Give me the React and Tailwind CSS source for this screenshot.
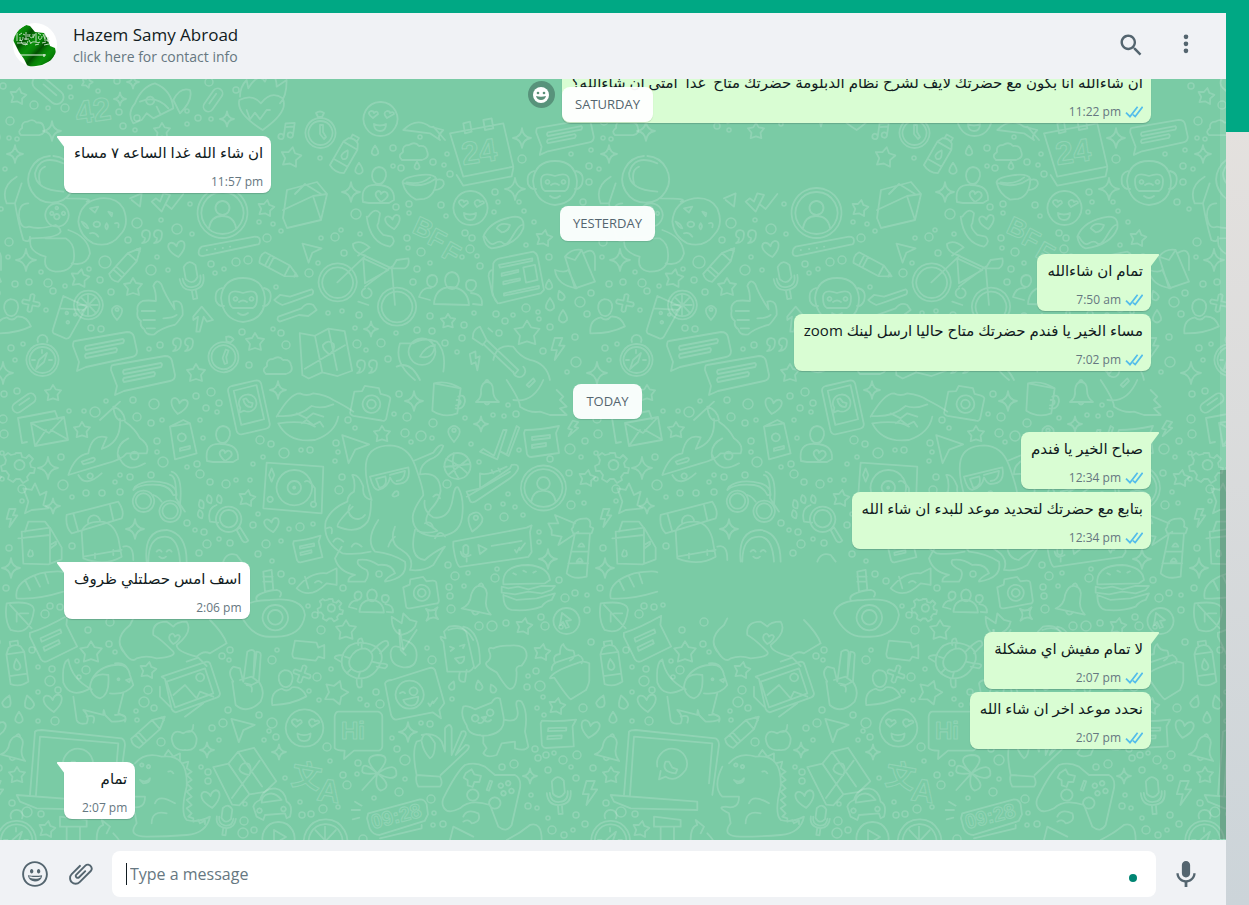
import React from "react";

/* ------------------------------------------------------------------ */
/*  DATA                                                               */
/* ------------------------------------------------------------------ */
const MESSAGES = [
  { out: true, first: false, react: true, text: "ان شاءالله انا بكون مع حضرتك لايف لشرح نظام الدبلومة حضرتك متاح  غدا  امتى ان شاءالله؟", time: "11:22 pm" },
  { out: false, first: true, text: "ان شاء الله غدا الساعه ٧ مساء", time: "11:57 pm" },
  { day: "YESTERDAY" },
  { out: true, first: true, text: "تمام ان شاءالله", time: "7:50 am" },
  { out: true, first: false, text: "مساء الخير يا فندم حضرتك متاح حاليا ارسل لينك zoom", time: "7:02 pm" },
  { day: "TODAY" },
  { out: true, first: true, text: "صباح الخير يا فندم", time: "12:34 pm" },
  { out: true, first: false, text: "بتابع مع حضرتك لتحديد موعد للبدء ان شاء الله", time: "12:34 pm" },
  { out: false, first: true, text: "اسف امس حصلتلي ظروف", time: "2:06 pm" },
  { out: true, first: true, text: "لا تمام مفيش اي مشكلة", time: "2:07 pm" },
  { out: true, first: false, text: "نحدد موعد اخر ان شاء الله", time: "2:07 pm" },
  { out: false, first: true, text: "تمام", time: "2:07 pm" },
];

/* ------------------------------------------------------------------ */
/*  ICONS                                                              */
/* ------------------------------------------------------------------ */
const PATHS = {
  search: "M15.9,14.3H15L14.7,14c1-1.1,1.6-2.7,1.6-4.3c0-3.7-3-6.7-6.7-6.7S3,6,3,9.7s3,6.7,6.7,6.7c1.6,0,3.2-0.6,4.3-1.6l0.3,0.3v0.8l5.1,5.1l1.5-1.5L15.9,14.3z M9.7,14.3c-2.6,0-4.6-2.1-4.6-4.6s2.1-4.6,4.6-4.6s4.6,2.1,4.6,4.6S12.3,14.3,9.7,14.3z",
  menu: "M12 7a2 2 0 1 0-.001-4.001A2 2 0 0 0 12 7zm0 2a2 2 0 1 0-.001 3.999A2 2 0 0 0 12 9zm0 6a2 2 0 1 0-.001 3.999A2 2 0 0 0 12 15z",
  smiley: "M9.153 11.603c.795 0 1.439-.879 1.439-1.962s-.644-1.962-1.439-1.962-1.439.879-1.439 1.962.644 1.962 1.439 1.962zm-3.204 1.362c-.026-.307-.131 5.218 6.063 5.551 6.066-.25 6.066-5.551 6.066-5.551-6.078 1.416-12.129 0-12.129 0zm11.363 1.108s-.669 1.959-5.051 1.959c-3.505 0-5.388-1.164-5.607-1.959 0 0 5.912 1.055 10.658 0zM11.804 1.011C5.609 1.011.978 6.033.978 12.228s4.826 10.761 11.021 10.761S23.02 18.423 23.02 12.228c.001-6.195-5.021-11.217-11.216-11.217zM12 21.354c-5.273 0-9.381-3.886-9.381-9.159s3.942-9.548 9.215-9.548 9.548 4.275 9.548 9.548c-.001 5.272-4.109 9.159-9.382 9.159zm3.108-9.751c.795 0 1.439-.879 1.439-1.962s-.644-1.962-1.439-1.962-1.439.879-1.439 1.962.644 1.962 1.439 1.962z",
  clip: "M1.816 15.556v.002c0 1.502.584 2.912 1.646 3.972s2.472 1.647 3.974 1.647a5.58 5.58 0 0 0 3.972-1.645l9.547-9.548c.769-.768 1.147-1.767 1.058-2.817-.079-.968-.548-1.927-1.319-2.698-1.594-1.592-4.068-1.711-5.517-.262l-7.916 7.915c-.881.881-.792 2.25.214 3.261.959.958 2.423 1.053 3.263.215l5.511-5.512c.28-.28.267-.722.053-.936l-.244-.244c-.191-.191-.567-.349-.957.04l-5.506 5.506c-.18.18-.635.127-.976-.214-.098-.097-.576-.613-.213-.973l7.915-7.917c.818-.817 2.267-.699 3.23.262.5.501.802 1.1.849 1.685.051.573-.156 1.111-.589 1.543l-9.547 9.549a3.97 3.97 0 0 1-2.829 1.171 3.975 3.975 0 0 1-2.83-1.173 3.973 3.973 0 0 1-1.172-2.828c0-1.071.415-2.076 1.172-2.83l7.209-7.211c.157-.157.264-.579.028-.814L11.5 4.36a.572.572 0 0 0-.834.018l-7.205 7.207a5.577 5.577 0 0 0-1.645 3.971z",
  mic: "M11.999 14.942c2.001 0 3.531-1.53 3.531-3.531V4.35c0-2.001-1.53-3.531-3.531-3.531S8.469 2.35 8.469 4.35v7.061c0 2.001 1.53 3.531 3.53 3.531zm6.238-3.53c0 3.531-2.942 6.002-6.237 6.002s-6.237-2.471-6.237-6.002H3.761c0 4.001 3.178 7.297 7.061 7.885v3.884h2.354v-3.884c3.884-.588 7.061-3.884 7.061-7.885h-2z",
};

function Icon({ name }) {
  return (
    <svg viewBox="0 0 24 24" className="h-7 w-7 fill-[#54656f]" aria-hidden="true">
      <path d={PATHS[name]} />
    </svg>
  );
}

function DoubleCheck() {
  return (
    <svg viewBox="0 0 18 12" className="h-3 w-[18px]" fill="none" stroke="#53bdeb" strokeWidth="1.7" aria-hidden="true">
      <path d="M1 6.6l4 4L12.6.8M8 8.6l2.2 2L17.6.8" />
    </svg>
  );
}

function Avatar() {
  return (
    <svg viewBox="0 0 44 44" className="h-11 w-11 rounded-full" role="img" aria-label="Profile photo">
      <defs>
        <linearGradient id="flag" x1="0" y1="0" x2="0.16" y2="0.14" spreadMethod="reflect">
          <stop offset="0" stopColor="#024f02" />
          <stop offset="0.5" stopColor="#068006" />
          <stop offset="1" stopColor="#0a8f0a" />
        </linearGradient>
      </defs>
      <rect width="44" height="44" fill="#fff" />
      <path d="M1 13l4-6 8-5 4 1 5 6 9 1 3 5 3 8 5 2 1 5-4 7-10 5-6 1-8 1-4-8-5-7-4-8-2-4z" fill="url(#flag)" />
      <path d="M4 10v8M6 12l3-2M7 14c0 5 3 5 3 0M13 9v8M10 11l2 1M11 16h5M15 11v3M17 11c-2 4 4 6 3 0M20 15l2-4M23 10v9M25 10l3 2M26 13c-2 4 3 5 3 0M30 11l2 5M32 11v7M35 14v5M33 17l4 1M4 20h9M6 17l3 1M8 19c2 4 6 3 7-1M16 17l2 4M18 20c3-3 6 1 9-1M22 22l4-1M29 20l4-1M31 22l5-1M12 22l3-1" fill="none" stroke="#d3e6d3" strokeWidth="0.9" />
      <path d="M7 32h26M31 31v3" fill="none" stroke="#e6f3e6" strokeWidth="1.2" />
    </svg>
  );
}

/* ------------------------------------------------------------------ */
/*  WALLPAPER                                                          */
/* ------------------------------------------------------------------ */
// Small motifs, each drawn round its own centre
const MOTIFS = {
  star: "M0-9l3 5 6 1-4 5 1 6-6-2-6 2 1-6-4-5 6-1z",
  spark: "M0-11q1 10 10 11q-9 1-10 11q-1-10-10-11q9-1 10-11z",
  plus: "M-2-8q2-2 4 0v6h6q2 2 0 4h-6v6q-2 2-4 0v-6h-6q-2-2 0-4h6z",
  heart: "M0 9C-12 0-10-7-6-8Q-2-8 0-3Q2-8 6-8C10-7 12 0 0 9z",
  bolt: "M-3-10h7l-3 7h5l-9 13 2-9h-5z",
  drop: "M0-7q-5 7-4 10q4 5 8 0q1-3-4-10z",
  cloud: "M-12 8q-5-4 1-8q-1-7 6-7q6-4 10 1q7-1 8 5q3 7-5 9z",
  pin: "M0 10q-8-9-6-14q6-8 12 0q2 5-6 14zM-2-3a2 2 0 1 0 4 0a2 2 0 1 0-4 0",
  plane: "M-9-10l20 9-11 3-6 10z",
  pencil: "M-20-6h28l12 6-12 6h-28q-4-6 0-12zM-14-6v12M-10-6v12M8-6v12M17-2v4",
  quotes: "M-3-4a4 4 0 1 0-5 4q0 4-3 5q8 0 8-9zM9-4a4 4 0 1 0-5 4q0 4-3 5q8 0 8-9z",
  mic: "M-6-14q6-8 12 0v12q-6 8-12 0zM-12-3q0 13 12 13q12 0 12-13M-9-3q0 10 9 10q9 0 9-10M-2 10v9h4v-9",
  pill: "M-8-5h16a5 5 0 0 1 0 10h-16a5 5 0 0 1 0-10zM-5-1h12",
  note: "M-4 6v-15l10-2v14M-4-5l10-2M-4 6a3 3 0 1 0-3 3q3 0 3-3M6 3a3 3 0 1 0-3 3q3 0 3-3",
  bell: "M-11 9q6-4 5-12q1-8 6-8q6 0 6 8q0 8 6 12zM-3 9q3 5 6 0M-2-11q2-4 4 0",
  person: "M0-18q8 1 7 9q-2 8-7 8q-6 0-7-8q0-8 7-9zM-17 15q0-14 12-15q5 5 10 0q10 0 13 11q-15 6-35 4z",
  lover: "M0-20q8 1 7 9q-2 8-7 8q-6 0-7-8q0-8 7-9zM-16 15q-3-18 14-17q18 0 17 15l-5 3h-20zM2 15q-9-8-3-11q3 0 3 3q3-4 6-1q3 4-6 9z",
  group: "M0-18q7 1 7 9q-2 8-7 8q-6 0-7-8q0-8 7-9zM-18 14q1-16 16-17q18 1 19 18zM-20-15q6 0 5 7q-2 5-5 5q-5-1-5-6q0-5 5-6zM19-10q6 0 5 6q-2 5-5 5q-5-1-5-6q0-5 5-5zM-22 10l-11-3q3-10 12-9M21 14l9 1q1-11-11-12",
  bubble: "M-30-9l52-9q6 0 7 5l3 14q0 5-5 6l-46 10-9 4 2-9-6-16q0-5 2-5zM-19-4l37-7q2 1 0 4l-37 7q-2-2 0-4zM-19 4l30-6q2 1 0 4l-30 6q-2-2 0-4z",
  card: "M-17-10q15 0 34-4l-3 7 3 20-28 4q-3 0-4-3l-3-21zM-10-3l18-2v3l-18 2zM-10 5l14-2v3l-14 2z",
  envelope: "M-20-10l30-8 10 12-6 26-34 8-4-10zM-24 10l30-14 14-2M6-4l8 24M-12-6l10-10 16 10",
  mail: "M-14-16l26-5 3 8M-16 10l-5 1-4-25 11-2M-12-9l33-6 4 23-33 6zM-12-9l18 10 15-16M-8 14l11-16M24 7l-16-9",
  clock: "M0-15a15 15 0 1 0 1 0zM0-12a12 12 0 1 0 1 0zM0-8v9l4 5 2-2-3-5v-7zM-4-20q4-3 8 0l-2 4h-4z",
  compass: "M0-16a16 16 0 1 0 1 0zM0-13a13 13 0 1 0 1 0zM5-7l-3 9-8 7 3-9zM-4-18a5 5 0 1 1 9 0M-10 0h3M10 0h-3M0-10v3",
  profile: "M0-25a25 25 0 1 0 1 0zM0-21a21 21 0 1 0 1 0zM0-12a7 7 0 1 0 1 0zM-13 15q2-12 13-12q12 0 14 12",
  face: "M0-17a17 17 0 1 0 1 0zM-7-1q-7-5-2-7q3 0 3 2q4-3 4 1zM7-1q-5-5 0-7q3 0 3 2q4-2 4 1zM-6 5q6 3 12 0q0 7-6 7t-6-7z",
  phone: "M-16-20l26-6q4 0 5 4l9 42q0 4-4 5l-26 6q-4 0-5-4l-9-42q0-4 4-5zM-14-15l24-6 8 36-24 6zM0-11a9 9 0 1 1-3 17l-5 2 1-5a9 9 0 0 1 7-14M-4-6q2 9 9 8l1-4-4-1-3-4z",
  camera: "M-16-9l7-1 2-5 13 1 2 5 6 1q4 1 3 4l-2 17q-1 3-4 2l-26-2q-4-1-3-4zM0-7a8 8 0 1 0 1 0zM0-3a4 4 0 1 0 1 0z",
  gear: "M-3-12h5l1 4 4 1 3-3 4 4-3 4 1 4 4 1-1 5-4 0-3 4 1 3-5 3-3-4-4 0-3 3-5-3 1-4-3-4-4 0-1-5 4-2 1-4-2-4 4-3 3 2 4-1zM0-5a5 5 0 1 0 1 0z",
  bottle: "M-6-18q6-4 12 0l3 6v30q-9 5-18 0v-30zM-9-12h18M-9 10h18M0-6q-4 6-3 9q3 4 6 0q1-3-3-9M-4-19v-5h8v5",
  map: "M-24-16l15 4 14-6 16 4 4 40-15 4-15-5-14 5-6-4zM-9-12l4 36M5-18l5 42M-22 20l42-20M4 8q-7-6-6-10q6-6 11 0q1 5-5 10z",
  face2: "M0-22q20 0 22 20q0 22-22 24q-20-2-22-24q2-20 22-20zM-21-12q-8 2-6 13q3 6 8 5M21-12q9 2 6 13q-3 6-7 5M-14-2q0-10 14-5q14-5 14 5q0 8-4 10h-20q-4-2-4-10zM-8-3a2 2 0 1 0 1 0M8-3a2 2 0 1 0 1 0M-5 13q5 4 10 0M-4 2q4-3 8 0",
  cup: "M-20-6q0-5 16-6q16-1 18 5q-2 17-14 19h-8q-10-6-12-18zM-20-6q17 8 33-1M14-6q8-1 7 5q-2 5-10 5M-16-6q14 4 24-3",
  citrus: "M0-18a18 18 0 1 0 1 0zM0-14a14 14 0 1 0 1 0zM0-12v24M-12 0h24M-8-9l17 18M9-9l-17 18",
  play: "M0-16a16 16 0 1 0 1 0zM-4-8l12 7-12 7z",
  cursor: "M0-13a13 13 0 1 0 1 0zM-4-8l9 7-5 1 3 6-3 1-3-6-3 3z",
  ball: "M0-13a13 13 0 1 0 1 0zM-11-7q11 4 21 14M-9 9q10-8 19-15M-3-13q-4 14 5 26M-13 1l26-3",
};

// motif, x, y, rotation, scale
const PLACED = [
  ["pill", 48, 90, 40, 1.4], ["star", 18, 96, 10, 0.9], ["spark", 120, 99, 0, 0.6], ["spark", 133, 82, 0, 0.6], ["pill", 213, 100, -55, 1],
  ["spark", 227, 119, 0, 0.7], ["spark", 52, 131, 0, 0.9], ["star", 162, 131, 0, 0.9], ["cloud", 32, 128, 0, 0.9], ["note", 288, 132, 8, 0.9],
  ["star", 87, 82, 20, 0.6], ["clock", 320, 133, 0, 1], ["star", 291, 157, 10, 1.1], ["spark", 15, 154, 0, 0.8], ["pencil", 127, 263, -48, 1],
  ["quotes", 153, 238, 0, 1], ["heart", 177, 249, -10, 0.9], ["profile", 222, 213, 0, 1], ["star", 266, 208, 10, 0.9], ["envelope", 307, 200, 0, 1],
  ["plane", 312, 251, -10, 0.9], ["pencil", 280, 267, 28, 1], ["mic", 192, 280, -10, 1], ["spark", 26, 260, 0, 1], ["star", 80, 278, 10, 1],
  ["star", 133, 287, 0, 1], ["face2", 243, 300, 0, 1], ["person", 12, 317, -5, 1], ["plus", 31, 303, 12, 1], ["pin", 117, 312, 0, 0.8],
  ["citrus", 88, 305, 0, 0.8], ["map", 325, 347, -5, 1], ["compass", 42, 360, 0, 1], ["bubble", 105, 350, 0, 1], ["bubble", 143, 374, 0, 1],
  ["quotes", 184, 346, 0, 1], ["clock", 223, 357, 20, 1], ["star", 255, 342, 0, 1], ["cloud", 278, 366, 0, 1], ["star", 196, 373, 0, 1],
  ["spark", 3, 373, 0, 1], ["bottle", 345, 155, 30, 0.9], ["face", 380, 119, 0, 1], ["cloud", 414, 152, 0, 1], ["cup", 423, 187, -5, 1],
  ["lover", 379, 187, 0, 1], ["spark", 351, 192, 0, 0.9], ["spark", 515, 189, 0, 1], ["spark", 522, 138, 0, 0.9],
  ["face", 470, 208, 0, 1], ["heart", 393, 222, -10, 0.8], ["face2", 555, 183, 0, 1], ["bubble", 565, 136, 0, 0.9], ["star", 544, 238, 10, 0.9],
  ["group", 452, 290, 0, 1], ["star", 448, 321, 0, 0.8], ["spark", 371, 329, 0, 0.7], ["bolt", 476, 361, -25, 0.9], ["bolt", 558, 349, 0, 1.1],
  ["star", 527, 333, 0, 1.4], ["quotes", 368, 368, 0, 1], ["drop", 375, 151, 0, 0.8], ["drop", 359, 169, 0, 0.9], ["drop", 417, 166, 0, 0.6],
  ["drop", 549, 285, 0, 0.8], ["drop", 550, 305, 0, 1], ["drop", 561, 296, -20, 0.8], ["drop", 563, 317, 0, 1], ["pill", 24, 403, -35, 1],
  ["mail", 43, 432, 0, 1], ["gear", 19, 465, 0, 1], ["spark", 48, 468, 0, 1], ["star", 53, 393, 0, 0.9], ["star", 82, 430, 0, 0.9],
  ["spark", 53, 506, 0, 0.7], ["bolt", 12, 518, 0, 0.9], ["spark", 135, 529, 0, 0.9], ["heart", 179, 406, 10, 0.9], ["lover", 223, 446, 0, 1],
  ["phone", 247, 405, 0, 0.95], ["spark", 278, 390, 0, 0.8], ["star", 247, 498, 10, 0.9], ["heart", 272, 525, -10, 0.8], ["card", 308, 548, -5, 0.8],
  ["spark", 11, 568, 0, 0.9], ["camera", 371, 403, 5, 1.1], ["spark", 414, 401, 0, 0.9], ["bell", 487, 393, 0, 1], ["star", 382, 434, 0, 0.9],
  ["plane", 355, 447, -5, 1.3], ["pin", 454, 433, 0, 0.9], ["spark", 481, 424, 0, 0.7], ["card", 542, 440, 0, 1], ["bolt", 573, 429, 15, 0.8],
  ["ball", 457, 466, 0, 1], ["profile", 543, 488, 0, 0.9], ["star", 587, 478, 10, 0.9], ["pin", 475, 521, 15, 1.1], ["spark", 548, 559, 0, 0.9],
  ["bell", 478, 600, 12, 1.3], ["camera", 421, 592, -15, 1], ["group", 372, 602, 0, 0.7], ["gear", 331, 608, 0, 0.75], ["star", 346, 630, 0, 1.1],
  ["spark", 432, 614, 40, 0.8], ["star", 524, 626, 10, 0.9], ["cursor", 566, 621, 0, 1], ["bottle", 17, 665, -8, 1], ["card", 53, 638, -18, 1.2],
  ["star", 91, 652, 0, 1.2], ["star", 148, 670, 10, 0.9], ["plus", 302, 674, 20, 1], ["person", 287, 688, -8, 1], ["drop", 7, 702, 20, 1],
  ["drop", 29, 703, -15, 1.1], ["drop", 19, 718, 0, 0.9], ["heart", 53, 703, -5, 1], ["pencil", 150, 730, -42, 1], ["plane", 243, 728, -10, 1.1],
  ["face", 304, 728, 0, 1.1], ["map", 242, 770, -28, 1], ["spark", 207, 750, 0, 0.7], ["spark", 279, 752, 0, 0.7], ["heart", 211, 799, -8, 1],
  ["mic", 226, 820, 8, 0.8], ["play", 278, 838, 0, 1], ["citrus", 325, 841, 0, 1.2], ["star", 17, 775, 0, 0.9], ["bell", 15, 748, 15, 1.1],
  ["compass", 16, 840, 0, 1.2], ["star", 47, 829, 10, 0.9], ["star", 336, 692, 20, 1.3], ["spark", 408, 732, 0, 0.9], ["star", 542, 652, 10, 0.9],
  ["star", 557, 706, 10, 0.9], ["card", 558, 732, 5, 1], ["heart", 590, 729, 10, 1], ["spark", 530, 776, 0, 0.7], ["mic", 559, 795, -5, 1],
  ["bolt", 590, 793, 0, 1.2], ["drop", 452, 686, 20, 0.7], ["drop", 479, 686, -10, 0.8], ["drop", 493, 689, -25, 0.7],
];

// One-off drawings, three units to the pixel: origin x, origin y, path
const SCENES = [
  // top band: pizza, guitar pick, flaming heart
  [0, 0, "M400 370q-20-30 5-60q20-50 60-60q50 20 55 75l-60 30-20-15-15 20zM420 305q50-20 85 20M450 290a12 12 0 1 0 1 0M470 320l10 20M520 300q20-40 50-30q10 30-30 70zM718 300q40-20 65 10q30-40 65-15q20 40-60 95q-80-50-70-90zM720 290q0-30 20-50l5 25q30-50 50-20l15-35q20 20 20 50l30-20q0 50-20 70M740 330l10 28 15-20 15 20 20-28 10 0"],
  // astronaut, cookie, envelope details
  [0, 120, "M150 108a70 70 0 1 0 10 0M190 130q-70-30-85 30q0 50 85 55M120 190q-10-40 15-50M50 170q-50 30-30 80l25 0M45 250q10 60 25 110q20 10 20-10M65 190l-20 60M85 250q-30 0-28 40q5 40 30 30q30 10 80-5q15 10 15 20q-10 20-90 20q-10 40 45 55q-10 40 30 45q60 0 55-55q0-30-25-45h-60M170 250a35 35 0 1 0 2 0M170 260a4 4 0 1 0 1 0M155 275a5 5 0 1 0 1 0M190 275a5 5 0 1 0 1 0M170 282a8 8 0 1 0 1 0M205 330q60 20 65 70q-10 40-55 30M200 235q90 0 60 10"],
  [0, 120, "M300 235q50-5 70 30q20 50-10 80q-30 40-80 25q-40-20-45-65q5-60 65-70zM270 265l25-5-10 18zM325 275l12 4-2 10zM290 305a10 8 0 1 0 1 0M320 310q8 8 0 18q-8-8 0-18M345 310q15-5 10 12M245 305q15 5 20 20-10 0-20-20M270 340q15-5 25 10M390 235l35-15-5 40-25-20M455 245l30 30 25-50-20-5-10 25-12-10zM500 255l15 12 35-45"],
  // password field, drink, thumb, arrow, cables
  [0, 120, "M605 380l160-30q15 0 15 12q0 12-10 12l-160 34q-15 0-14-10q0-12 9-18zM620 390h1M645 387h1M668 384h1M690 380h1M190 528l70 32-50 90q-6 8-14 5l-35-15q-5-5-2-12zM180 565l75 5M200 575a4 4 0 1 0 1 0M225 580a4 4 0 1 0 1 0M203 603a4 4 0 1 0 1 0M520 545q30-10 28 40-20 30-25 30-40 10-60 28q-25 5-30-15-15-10-10-25-15-10-10-30-5-20 15-30 15-3 40 0 0-30-8-45 10-25 24-5 10 30 40 75zM425 573h40M430 600h35M440 625h25M490 595q30 0 40-10M580 590l25-30 34 40-18 5-10-15-12 45-10 0 5-45-14 10zM840 525l30 5 65-22q8 5 2 15l-60 22-30 10q-20-10-24-15zM835 590l70-25q15-20 35-10l10 15-25 18-28-3-58 20q-10-5-4-15z"],
  // calendar, bird, donut, phone, bicycle
  [300, 120, "M450 40l160-30 30 130-150 30zM470 165l20 32 145-28 5-25M490 10l20-5 5 30-20 5zM550 0l25-5 5 30-25 5zM310 30q40-40 80-10l40 10q-20 20-10 30l-30-20q-40-5-80-10M400 20l35 40M205 290q20-30 35-10l-5 30q-10 10 15 35l25 5q15 15-5 30-60-10-70-90zM550 350q20-50 95-60q30 0 25 35q-20 50-95 60q-20-5-25-35zM590 325q10-20 40-10-5 20-25 22zM555 350q15 30 30 20t25 0 30-25 30-30M112 430a57 57 0 1 0 2 0M112 442a46 46 0 1 0 2 0M290 503a57 57 0 1 0 2 0M290 515a46 46 0 1 0 2 0M112 487l85-80q-40-10-38-35 20-15 50 10l-35 25M190 420l5 70 70-40-75-35M195 500l80-60 10 115M200 410l75 35 15-25 35-5q5 20-10 30h-45M195 505a15 15 0 1 0 10 0M175 545l30 10"],
  // newspaper, watering can, toucan, guitar
  [300, 120, "M580 430q5-12 20-15l100-20q12 5 14 20l18 95-10 10-125 30q-12 0-20-35zM580 450q-15 0-14 20l12 55 15 25M597 435l100-20v8l-97 20zM605 460l50-10v6l-50 12zM610 485l50-10v6l-50 12zM612 520l105-22v7l-105 22zM670 442l35-7 8 45-35 8zM795 410q20-25 50-20l40 95-60 20zM795 410l30 10 20-30M765 450q30 10 40 0l25 55q-60-10-65-55zM850 400q30-20 35 10v40M300 670h40q30-20 70-5 30 30 20 90M300 670q-20 60 45 110M365 655a40 40 0 1 0 2 0M360 710q15-30 45-35-5 45-45 35zM290 740q40-20 70 40M520 640q5-15 20-20l20 40-12 15-30-20zM560 660l95 90-10 12-95-90M640 755a18 18 0 1 0 30-15M580 720q10-50 60-40 20 30 50 40 50 10 60 60M565 625l12 10"],
  // scooter, milk, bag, binoculars
  [0, 380, "M205 285q20-60 60-65 10-60 55-48l-15 35q60-20 55-90M300 120l60-55M340 80q30 10 35 40-30 10-35-40zM375 125q30 20 45 50 30 20 20 45h-60q-15 20-60 30L205 285M245 245l35-12q10 4 0 12l-30 8zM235 285q20 40 70-5M270 280a8 8 0 1 0 1 0M355 225q20 60 80 25M403 215a12 12 0 1 0 1 0M385 175q-40 20-30 60M65 455l85-12 35 60v35l-40 15-75-2zM75 455l10-30h50l15 20v105M55 475l95-10M90 510q-12 18 0 20 14 0 6-18M150 495l18-10v8l-16 12zM200 405l155-40q20 30 10 50l-150 45q-20-20-15-55zM220 400l15 55M330 375l10 45M245 455q10-30 55-30 40 0 55 50l10 55q-50 30-115 5zM250 530l115-20M285 520v15M340 510v15M265 430a18 18 0 1 1 35-5M370 500q30-10 30 40"],
  [0, 380, "M430 332a32 32 0 1 0 1 0M430 340a23 23 0 1 0 1 0M510 362a32 32 0 1 0 1 0M510 370a23 23 0 1 0 1 0M400 330q20-20 80-15 30 5 40 30l10 0q0-25-30-35-60-15-95 10zM460 345q15 5 25 20M515 275q35 10 25 100M510 285q20 0 18 70l27 40M70 325l25 5 10-20 15 35 20-10-10 40 15 10-50 5-20 10 10-35zM510 140l60-10 20 90-65 18zM510 140l40-20 20 10M545 160a12 12 0 1 0 1 0M540 205l30-7v8l-30 7zM685 380a38 38 0 1 0 2 0M685 390a26 26 0 1 0 2 0M710 450l10-8 25 40q-10 10-18 0zM600 360q15 0 10 25-20 0-10-25zM625 345q15 5 8 25-20-5-8-25zM655 345q15 5 8 25-20-5-8-25zM598 390q15 5 8 25-20-5-8-25zM650 375q-30 10-20 50l25 3"],
  // lips, turntable, croissant, fish, telephone, leaf
  [0, 380, "M830 110q40-70 70-70 20 10 40 0 40 5 60 20 40 20 60 35M835 108q60 5 100-30 30 10 65-5M835 130q80-10 110 10M835 130q30 60 110 50 60-20 70-70M890 100l30 15 20-15 30 10M905 130l15-10 20 15 20-10 10 15M800 248l170 12-5 140-175-15zM882 270a53 53 0 1 0 2 0M882 303a20 20 0 1 0 2 0M882 320a3 3 0 1 0 1 0M815 265l8 20-8 20-8-20zM915 305q10-10 30 20v40M940 365a8 8 0 1 0 1 0M810 350a8 8 0 1 0 1 0M50 655q-10-50 70-75 60-10 70-3M50 655q60 5 140-20M75 600l15 30M105 590l15 30M135 580l10 30M890 625q40-50 90-45l30-15 0 50-30-5q-50 50-90 15zM915 590l10 35M945 608q10-10 20 0M720 700q10-40 90-40 100-10 105 45-10 70-100 65-60 5-95-70zM825 675a38 38 0 1 0 2 0M825 690a22 22 0 1 0 2 0M770 660q-10-20 60-30 20 5 10 20M790 575l25-5 5 60-25 5zM790 590h28M790 605h28M20 670q80-10 82 20-10 80-70 60-20-30-12-80zM30 675l65 70M50 700l0 25M60 700h25M440 545q-10-95 60-95 60 10 60 95M445 545q0-75 50-75 40 0 45 75M470 515q8-10 15 0M500 515q8-10 15 0M478 530q10 10 20 0M670 545q10-30 40-20l15 20"],
  // mug, rocket, double check, trainer
  [300, 380, "M402 10l80 15-10 75q-40 15-75-8zM402 10q40-10 80 15M475 50q20-10 20 15-5 25-28 20M470 60q14-2 12 8-4 10-14 8M620 0q40 60 40 80 30 20 60 15l30 10 50 0-20-20 20-5-20-20 10-10-20-20M640 60q60 10 90-60M680 15l20-20 5 8-18 18zM540 215l10-8 32 20 28-77 10 0-28 88zM602 215l18 8 30-85 8 5-32 85zM500 335l40-10 60-40 30-20 5-10q20-5 20 10-5 15-25 30l-105 70q-12 5-15-3zM540 325l0-45q20 10 80-20M575 270l5 10M595 265l5 10M500 350l130-75"],
  // octopus in sunglasses
  [300, 380, "M215 360q-25-80-15-120 10-42 70-44 55 2 75 60 25 70 25 90-30 40-32 65 0 55 70 58 70 0 78-55 8-60-12-92-10-5-15 30-10 70-60 60-30-20-25-50M340 243l60-25q20-30 30-20-10 30-40 40-30 15-30 45 60-10 62 50-5 30-30 55-20 30-10 45 20 10 30 20-30 10-60 0M215 360q-30-5-25-40-15-40-33-35 10 20 5 50-20 10-20 30-50 20-65 60-10 60 50 95 40 5 85-5M158 380q-50 50-45 60 60 25 90-15 10-20 10-60M150 375a25 25 0 0 0 45 30M235 420q-40 60-10 95 50 5 90 30 10 50-60 60 0-10 30-25-10-30-50-25-30-20-60-15-10 15 25 30 10 15-5 35-30 0-50 0 0-15 20-20-50-10-60-50 10-20 20-35M285 440q-20 50 20 70 40 25 25 60 40 5 70-15 30-50 35-55-40 20-60 40-50-5-30-90M210 290l115-28q10 50-35 50-10 0-20-20-5 30-35 38-15 0-25-40zM228 297l28-8q8 30-18 35zM270 285l45-12q-2 30-25 30M285 335q12-5 10 10-15 10-18 0zM80 445q20-10 15 15M100 485q10-20 30 0M155 500q10-20 30 0M400 350q15-15 20 5M375 430q20-10 25 15M405 475q15-30 30-5M265 500q5-20 20-30"],
  // voice note, lighthouse, burger, cherry
  [300, 380, "M460 485l220-42 15-7-5 20 5 60-10 15-205 30q-12-5-20-60zM490 500q8-10 15 0v20q-8 10-15 0zM482 515q5 25 30 10M500 535v10M535 495l25 12-20 15zM575 498l90-15M645 510l5 8 8-15M660 510l15-20M820 440q0-25 40-25 15 5 10 25l10 5-5 15h-55l-5-12zM825 460l-25 120q20 20 60 10l10-130M815 515h48M805 550h60M835 500q10-20 18 0zM830 545q10-20 18 0zM825 430l-60-25 10 25-30 0 10 20 0 15 30 5-10 25 60-40M610 600q5-45 75-45 60 5 65 45l-15 10-125 3zM605 620l20 5 30-5 30 8 40-10 40 0-10 12-30 10-40-5-40 8-40-5zM610 645l40 15 60-5 55-15-10 20q-20 5-30 20-40 15-90 10-25-5-25-45M640 580l8 4M670 572l8 4M700 578l8-4M275 710l30 20 5-30 20 20 20 5q-5 30-45 40-30-10-30-55zM300 750l10 60 40-60M445 750q50-20 75 30"],
  // puppy, photos, victory hand, camcorder, hugging hands
  [0, 620, "M205 118q-20 10-15 70 20 50 80 18M205 118q10 60 70 90M275 180q20-40 70-45 40-5 45 30l10 30q-20 30-70 25M325 165q-50-10-55 35 5 30 30 35 30-10 25-70M355 175a3 3 0 1 0 1 0M378 180l15-5-5 12zM345 130q30-5 40 20M220 230l10 70q5 15 30 10 10-20-10-40l60 15q0-30 5 0l20 20q50 0 40-15l-20-10 15-60M260 290q30-10 20 18M345 285q40-5 30 20M370 95q-30-40 20-80l10-20M360 75q30 60 50 40 30-10 60 0 60-5 50-20-40-40-60-50-5-40 40-40 15 10 20 15 10-15 40-15 20 30-30 70 0 20 60 35 20-20 40-10l50-30q-10-30-50-70M510 45q10-10 15 5 10-10 15 0-5 15-20 22-18-15-10-27M485 170l135-45q10 0 12 10l28 85q0 10-8 12l-125 45q-8-2-12-10l-20-90zM500 185l115-40 25 75-115 42zM520 225l35-30 35 40 10-20 40 15M600 160a12 12 0 1 0 1 0M560 125l35-12 25 25M480 200v30l30 30M555 290l55-40M700 185q-20-30 0-45l20 5 10 40 12-90q15-10 22 0l-4 80 10-80q15 0 12 15l-5 75q20 30 5 60-40 40-75 10l-10-70zM720 180l35-10 20 15-20 10-20-5M740 195q20 0 15 20M885 62l65 6 5 15 18-8v40l-18-5-8 12-65-8q-5-3-5-12z"],
  // laptop, dinosaur, apple, car
  [0, 620, "M105 335q5-5 20-5l240 25q10 5 10 20l-20 150M105 335l-15 190M120 350l235 20-10 120M120 350l-12 175M50 525l260 20 0 25-200-5-50-20zM190 440a45 45 0 1 1 85 10q-30 40-60 20l-20 8 5-25M215 425q-15 30 30 35l5-12-15-5-10-18zM405 430q30-35 80-20 80-10 75 90-20 80 0 100 30 10 70-10-10 50-70 55-60 5-120 5-60 0-30-40l-5-30q-40-20-10-20 40 10 40-30h-50q-30-30 0-90M425 430a5 5 0 1 0 1 0M445 435a5 5 0 1 0 1 0M420 480q20 10 30-5 0 15-20 15zM505 455q10-5 15 5M465 550q10-30 60 0M455 610q0-40 45-30M495 405l10-15 15 20M520 410l20-10 0 22M545 430l20-5-5 20 15 10-15 10 15 15-15 10 15 15-15 10 15 15-15 10 15 15-15 10 15 15-10 10 15 5 0 10 15-5 5 10 15-8 0 10M550 340q30-20 40 15 0 40-35 35-35 5-40-35 5-30 35-15zM560 335q20 5 20-20M760 560q5-15 20-20 10-35 45-35 30 5 35 40 20 10 10 45l-10 5-5-15-60 5-5 15-20-10zM785 548l60-8q-20-25-40-18-20 5-20 26zM778 565a7 7 0 1 0 1 0M850 560a7 7 0 1 0 1 0M180 590l80 10 0 20-80 0zM200 620l0 40M240 620l0 40M290 660q0-40 20-45l-5-15 25 20-10 20M340 640q20 20 20 30"],
  // turtle, cherry, ice cream, bear hug, cupcake
  [300, 620, "M130 100q20-40 70-30 50 10 45 50-20 60-75 55-60-20-40-75zM150 115q15-30 45-30 30 10 20 40-15 35-45 30-30-10-20-40zM130 105q-30 0-25 10l20 12M175 75q-5-20 10-20l5 15M235 75q30-25 30 0l-25 25M235 130q40 0 20 15l-25-5M170 180q0 30 15 20l0-25M150 115l-15-5M185 85l0-15M215 95l20-20M215 125l25 5M180 155l-5 20M155 145l-15 15M310 60q40 10 40 45 0 40-40 37-40-5-38-45 5-30 38-10M297 30l5 60 15 15M430 65q-10-10-8-15l15 5-5-20 15-15q50-10 55 30l20 90q-5 10-15 15l-65 0zM490 20q50 10 50 110l-15 15M480 155q-10 35 15 30l5-35M450 80l12 5-10 8M480 78l14-4-5 10M465 115l28-5q0 20-15 20zM570 100q-10-20 10-15 20-10 50-8 50-5 50 30 0 10-15 30-20 0-15 20 0 50-20 50-10 0-40-50-40-20-30-30 15-10 10-27zM765 130q-10-25 15-28 0-25 10-30 5 20 30 20 10 20-10 30M755 150q0-20 20-25l60-20q20 10 10 25M750 175q5-20 80-45 20-10 38 0l0 50q0 10-10 30l-45 28q-10-5-50-65z"],
  // winking bubble, Hi bubble, cat, OK hand, clover
  [300, 620, "M255 190q5-10 20-10l110-35q15-5 20 5l28 100-15 20 5 25-25-18-110 22q-10 0-15-15zM328 182a42 42 0 1 0 2 0M300 220q10-8 15 0M340 202a12 12 0 1 0 1 0M310 240l45-10q0 25-20 27-20 0-25-17M385 250l5 8 8-14M400 250l12-16M115 275h120q12 5 12 15v90q-2 10-10 12h-75l-30 25 2-25q-25 0-30-8v-95q3-14 11-14zM490 260q10-5 35 8l50-20q10-20 25-12l10 50q10 50-45 60-60 5-65-30-20-30-10-56zM525 285a10 10 0 1 0 1 0M570 268a10 10 0 1 0 1 0M545 292l14-2-5 10zM535 308q10 5 18-8 10 10 20 0M615 300q50 10 35-40-5-25 15-15 20 30 10 90l10 45q-10 15-40 5l0-20-40 5-15 35q-30 10-40-5l10-15-10-15 0-20-10-5M350 465q-15-70 0-100l15-5q10-40 40 10 0 40-15 45-20-20-25-50M365 345q40-10 60 20l10 30 0-70q15-20 20 0v80l30-70q15-5 12 10l-30 60 30-30q20 0 0 20l-75 70M350 465l70 5q10 20 0 30l-65 0q-10-15-5-35zM232 460l-45 50M232 460q-50-50 0-55 50 0 0 55zM232 460q60-40 57 5-10 20-57-5zM232 460q50 40 10 52-20-10-10-52zM232 460q-50 5-45-10 0-30 45 10z"],
  // gamepad, alarm clock, letters, horse
  [300, 620, "M430 535q40-80 65-100 30-10 60 5l30 25h60q20 10 15 40l-25 110q-15 25-40 5l-25-65q-60-20-90 10-40 20-50-5-5-10 0-25zM497 460l18-12 8 15 20 5-5 18-15 0-5 15-15-5 0-15-12-8zM518 508a17 17 0 1 0 1 0M584 532a17 17 0 1 0 1 0M560 510l10-28 7 2-10 28zM602 490a7 7 0 1 0 1 0M624 483a7 7 0 1 0 1 0M610 513a7 7 0 1 0 1 0M634 506a7 7 0 1 0 1 0M205 580l155-42q15 0 20 15l4 30-10 20-135 42q-20 0-30-20l-8-30zM240 655l125-30 0-10M165 545l20 12M155 570l25 0M158 598l20-5M490 590q10-25 45-10 10 25-20 30-10-15-25-5M460 620l60 30M460 620l-10 40M620 660q40-20 70-45 35-10 35 45"],
];

// x, y, radius of the loose rings between the motifs
const RINGS = [
  [3, 86, 3], [34, 105, 4], [65, 108, 4], [48, 108, 2], [70, 87, 2], [71, 97, 2], [98, 91, 2], [117, 81, 3], [119, 112, 3], [137, 118, 3],
  [135, 130, 2], [10, 121, 4], [9, 138, 2], [123, 126, 3], [209, 82, 4], [187, 111, 2], [198, 118, 3], [187, 124, 2], [211, 119, 2], [236, 90, 3],
  [17, 139, 2], [5, 169, 2], [1, 209, 2], [9, 242, 4], [8, 257, 2], [128, 240, 3], [137, 223, 5], [161, 220, 2], [177, 229, 5], [190, 204, 2],
  [192, 234, 2], [259, 222, 2], [273, 224, 2], [281, 231, 2], [267, 238, 4], [321, 238, 2], [105, 262, 6], [151, 270, 5], [157, 257, 2], [168, 270, 2],
  [211, 264, 3], [215, 273, 2], [224, 269, 2], [236, 262, 4], [248, 260, 4], [309, 273, 4], [318, 263, 2], [276, 287, 2], [15, 284, 3], [29, 282, 3],
  [41, 272, 2], [48, 283, 4], [53, 291, 3], [65, 286, 2], [89, 269, 2], [100, 280, 3], [111, 292, 3], [46, 310, 2], [91, 328, 3], [101, 329, 3],
  [11, 348, 3], [23, 344, 2], [15, 360, 2], [149, 349, 2], [160, 345, 3], [242, 332, 3], [273, 329, 2], [281, 333, 3], [286, 345, 4], [249, 365, 3],
  [320, 158, 2], [393, 148, 3], [393, 166, 2], [401, 168, 3], [433, 162, 3], [447, 154, 2], [450, 174, 3], [444, 165, 2], [420, 137, 2], [522, 159, 4],
  [495, 192, 3], [498, 202, 2], [524, 211, 2], [519, 202, 2], [494, 212, 2], [534, 222, 2], [583, 202, 3], [589, 166, 3], [589, 182, 3], [571, 154, 2],
  [591, 150, 2], [356, 214, 5], [396, 207, 3], [409, 204, 3], [409, 213, 2], [441, 205, 3], [446, 216, 2], [341, 230, 2], [335, 237, 4], [360, 234, 2],
  [407, 238, 3], [408, 248, 2], [421, 252, 4], [417, 269, 3], [413, 282, 3], [430, 263, 2], [344, 253, 3], [465, 233, 3], [472, 238, 3], [470, 249, 4],
  [462, 257, 2], [477, 256, 2], [480, 266, 3], [526, 245, 2], [549, 257, 3], [328, 313, 2], [342, 311, 2], [359, 315, 3], [430, 316, 3], [474, 313, 2],
  [464, 325, 3], [496, 314, 3], [505, 321, 3], [513, 315, 2], [526, 308, 4], [538, 312, 2], [539, 319, 2], [550, 327, 3], [575, 337, 3], [580, 302, 5],
  [591, 293, 3], [587, 314, 3], [355, 328, 2], [396, 333, 2], [417, 330, 3], [432, 331, 3], [445, 343, 3], [462, 338, 3], [457, 352, 2], [357, 344, 4],
  [366, 350, 2], [381, 343, 4], [388, 359, 3], [499, 333, 3], [543, 351, 3], [576, 362, 5], [567, 372, 2], [4, 394, 3], [17, 391, 3], [3, 419, 4],
  [4, 434, 4], [69, 411, 2], [84, 411, 2], [95, 412, 5], [106, 401, 2], [133, 400, 3], [137, 417, 4], [154, 404, 5], [151, 423, 3], [162, 420, 2],
  [200, 420, 2], [157, 441, 3], [157, 452, 2], [163, 462, 5], [196, 396, 3], [211, 392, 4], [206, 408, 3], [219, 403, 3], [217, 412, 2], [203, 438, 2],
  [260, 440, 4], [271, 444, 3], [284, 453, 5], [301, 450, 2], [310, 450, 3], [253, 464, 2], [263, 457, 2], [2, 479, 2], [22, 489, 4], [61, 457, 3],
  [63, 485, 5], [72, 497, 2], [86, 493, 3], [102, 493, 3], [115, 482, 2], [120, 492, 3], [120, 475, 2], [130, 477, 3], [151, 475, 3], [187, 467, 2],
  [197, 464, 3], [200, 474, 4], [210, 482, 3], [226, 484, 4], [236, 480, 2], [250, 480, 2], [258, 514, 2], [253, 525, 3], [187, 523, 3], [195, 530, 2],
  [204, 532, 3], [207, 544, 4], [219, 539, 2], [230, 543, 3], [199, 553, 3], [266, 544, 4], [281, 541, 2], [300, 527, 4], [289, 529, 2], [313, 524, 2],
  [258, 554, 3], [272, 561, 2], [281, 574, 3], [292, 581, 3], [9, 548, 3], [6, 588, 3], [22, 501, 2], [72, 546, 3], [50, 606, 3], [60, 607, 3],
  [69, 605, 2], [45, 614, 4], [88, 630, 3], [110, 622, 4], [321, 630, 4], [399, 394, 3], [394, 414, 2], [407, 417, 4], [465, 418, 2], [433, 423, 4],
  [348, 420, 3], [355, 428, 2], [405, 433, 4], [421, 436, 5], [432, 438, 2], [411, 442, 2], [336, 443, 3], [338, 452, 2], [335, 461, 2], [342, 477, 3],
  [339, 490, 4], [471, 444, 2], [479, 462, 2], [447, 484, 4], [508, 405, 2], [493, 415, 2], [504, 416, 2], [516, 414, 3], [519, 450, 2], [550, 459, 3],
  [570, 449, 5], [581, 457, 2], [585, 441, 3], [596, 453, 2], [569, 473, 3], [578, 492, 2], [571, 505, 4], [584, 503, 2], [508, 494, 2], [488, 507, 3],
  [503, 504, 2], [515, 507, 2], [523, 515, 2], [504, 517, 4], [539, 532, 2], [539, 542, 2], [448, 565, 3], [455, 576, 4], [468, 573, 2], [449, 587, 3],
  [450, 596, 3], [451, 609, 4], [464, 586, 2], [497, 569, 2], [495, 578, 4], [379, 574, 3], [343, 588, 3], [559, 580, 3], [565, 598, 4], [575, 593, 3],
  [587, 595, 2], [587, 610, 3], [561, 627, 2], [541, 617, 3], [545, 626, 4], [506, 623, 3], [492, 626, 5], [479, 626, 4], [315, 615, 3], [308, 606, 2],
  [32, 650, 3], [109, 644, 3], [115, 652, 2], [77, 661, 2], [38, 667, 2], [52, 669, 3], [50, 681, 5], [58, 690, 3], [38, 692, 2], [86, 670, 4],
  [79, 677, 2], [148, 690, 4], [144, 702, 5], [154, 708, 3], [136, 711, 2], [137, 720, 2], [55, 721, 4], [38, 721, 2], [228, 710, 3], [223, 723, 4],
  [212, 728, 3], [219, 740, 2], [161, 742, 4], [259, 715, 3], [272, 723, 5], [269, 731, 2], [276, 737, 3], [264, 740, 2], [222, 656, 3], [230, 650, 3],
  [229, 660, 2], [277, 650, 2], [272, 660, 4], [317, 677, 4], [309, 691, 2], [319, 700, 2], [201, 767, 2], [208, 772, 3], [208, 781, 3], [285, 778, 2],
  [245, 804, 2], [244, 821, 4], [243, 833, 5], [254, 830, 3], [300, 802, 2], [302, 815, 3], [311, 814, 3], [323, 809, 4], [27, 812, 5], [41, 814, 3],
  [12, 803, 3], [331, 669, 2], [376, 692, 3], [360, 699, 2], [367, 705, 2], [380, 704, 4], [432, 660, 4], [427, 648, 2], [452, 699, 2],
  [421, 723, 2], [430, 724, 3], [392, 738, 2], [397, 749, 3], [405, 760, 5], [327, 747, 4], [330, 761, 2], [358, 763, 3], [357, 774, 2], [343, 775, 3],
  [347, 785, 4], [405, 779, 2], [399, 792, 4], [374, 798, 2], [431, 799, 4], [434, 813, 2], [433, 825, 2], [443, 824, 3], [338, 807, 2], [363, 839, 4],
  [528, 676, 2], [536, 671, 3], [540, 686, 5], [527, 687, 3], [543, 697, 2], [537, 708, 2], [544, 715, 2], [583, 708, 4], [535, 749, 3], [538, 758, 3],
  [546, 755, 3], [554, 753, 2], [563, 760, 4], [577, 755, 4], [571, 767, 2], [548, 770, 3], [576, 778, 3], [593, 768, 3], [514, 764, 4], [502, 767, 3],
  [531, 795, 2], [528, 806, 3], [537, 808, 2], [548, 818, 2], [552, 830, 4], [564, 835, 3], [576, 815, 3], [585, 824, 3], [573, 830, 2], [591, 642, 3],
];

const LETTERS = [
  ["42", 77, 124, -8, 32], ["24", 463, 165, -8, 32], ["B", 411, 232, 25, 26], ["F", 426, 243, 28, 26], ["F", 440, 256, 30, 26],
  ["Hi", 341, 739, 0, 24], ["09:28", 373, 829, -14, 20], ["A", 316, 800, 8, 32], ["文", 290, 784, 10, 30],
];

function Wallpaper() {
  return (
    <svg className="absolute inset-0 h-full w-full" fill="none" stroke="#fff" strokeOpacity="0.17" strokeWidth="1.8" strokeLinecap="round" strokeLinejoin="round" aria-hidden="true">
      <defs>
        <g id="doodles">
          {PLACED.map(([name, x, y, r, s], i) => (
            <path key={i} d={MOTIFS[name]} transform={`translate(${x} ${y}) rotate(${r}) scale(${s})`} vectorEffect="non-scaling-stroke" />
          ))}
          {SCENES.map(([x, y, d], i) => (
            <path key={i} d={d} transform={`translate(${x} ${y}) scale(0.3333)`} vectorEffect="non-scaling-stroke" />
          ))}
          {RINGS.map(([x, y, r], i) => <circle key={i} cx={x} cy={y} r={r} strokeWidth="1.5" />)}
          {LETTERS.map(([t, x, y, r, size], i) => (
            <text key={i} transform={`translate(${x} ${y}) rotate(${r})`} fontSize={size} fontWeight="700" strokeWidth="1.2" fontFamily="'Liberation Sans', 'Noto Sans CJK SC', sans-serif">{t}</text>
          ))}
        </g>
      </defs>
      {[-594, 0, 594, 1188].map((x) => <use key={x} href="#doodles" x={x} y={-79} />)}
    </svg>
  );
}

/* ------------------------------------------------------------------ */
/*  CHAT PARTS                                                         */
/* ------------------------------------------------------------------ */
function DayChip({ children }) {
  return (
    <div className="rounded-lg bg-white/95 px-[13px] text-[13px] leading-[35px] text-[#54656f] shadow-[0_1px_1px_rgba(11,20,26,0.13)]">
      {children}
    </div>
  );
}

function Tail({ out }) {
  return out ? (
    <svg viewBox="0 0 8 12" className="absolute top-0 -right-2 h-3 w-2" fill="#d9fdd3" aria-hidden="true">
      <path d="M0 0h7q2 0 .5 2L0 12z" />
    </svg>
  ) : (
    <svg viewBox="0 0 8 12" className="absolute top-0 -left-[7px] h-3 w-2" fill="#fff" aria-hidden="true">
      <path d="M8 0H1q-2 0-.5 2L8 12z" />
    </svg>
  );
}

function Message({ out, first, react, text, time }) {
  return (
    <div className={`flex items-center gap-[7px] ${out ? "justify-end" : "justify-start"} ${first ? "mt-[13px]" : "mt-[3px]"}`}>
      {react && (
        <button aria-label="React" className="flex h-[27px] w-[27px] items-center justify-center rounded-full bg-[#0b141a]/30">
          <svg viewBox="0 0 16 16" className="h-4 w-4" aria-hidden="true">
            <circle cx="8" cy="8" r="8" fill="#fff" />
            <circle cx="5" cy="6" r="1.3" fill="#5b9079" />
            <circle cx="11" cy="6" r="1.3" fill="#5b9079" />
            <path d="M3 9q5 1.500 10 0q-1 4-5 4t-5-4z" fill="#5b9079" />
          </svg>
        </button>
      )}
      <div className={`relative rounded-lg px-2 pt-1 pb-[3px] shadow-[0_1px_1px_rgba(11,20,26,0.18)] ${out ? "bg-[#d9fdd3]" : "bg-white"} ${first ? (out ? "rounded-tr-none" : "rounded-tl-none") : ""}`}>
        {first && <Tail out={out} />}
        <p dir="rtl" className="pl-0.5 text-[15px] leading-[25px] whitespace-pre text-[#111b21]">{text}</p>
        <div className="mt-[9px] flex items-center justify-end gap-1 pl-2.5 text-[12px] leading-4 text-[#667781]">
          <span>{time}</span>
          {out && <DoubleCheck />}
        </div>
      </div>
    </div>
  );
}

function Header() {
  return (
    <header className="flex h-[66px] shrink-0 items-center bg-[#f0f2f5] pr-[26px] pb-0.5 pl-[13px]">
      <Avatar />
      <div className="ml-4 flex-1">
        <h1 className="text-[17px] leading-6 text-[#111b21]">Hazem Samy Abroad</h1>
        <p className="text-[14px] leading-5 text-[#667781]">click here for contact info</p>
      </div>
      <button aria-label="Search" className="mr-[27px]"><Icon name="search" /></button>
      <button aria-label="Menu"><Icon name="menu" /></button>
    </header>
  );
}

function Composer() {
  return (
    <footer className="flex h-[65px] shrink-0 items-center bg-[#f0f2f5] pt-[3px] pr-[26px] pl-[21px]">
      <button aria-label="Emoji"><Icon name="smiley" /></button>
      <button aria-label="Attach" className="ml-[18px]"><Icon name="clip" /></button>
      <div className="mr-4 ml-[17px] flex h-[46px] flex-1 items-center rounded-lg bg-white pr-[19px] pl-3.5">
        <span className="h-[22px] w-px bg-[#111b21]" />
        <input aria-label="Type a message" placeholder="Type a message" className="ml-[3px] min-w-0 flex-1 text-[16px] text-[#3b4a54] outline-none placeholder:text-[#667781]" />
        <span className="mt-2 h-2 w-2 rounded-full bg-[#008573]" />
      </div>
      <button aria-label="Voice message"><Icon name="mic" /></button>
    </footer>
  );
}

export default function App() {
  return (
    <div className="relative h-screen overflow-hidden bg-linear-to-b from-[#e8e3df] to-[#ccd4d9] font-['Open_Sans','DejaVu_Sans',sans-serif]">
      <div className="absolute inset-x-0 top-0 h-[132px] bg-[#00a884]" />
      <div className="relative flex h-full flex-col pt-[13px] pr-[23px]">
        <Header />
        <main className="relative flex min-h-0 flex-1 flex-col justify-end overflow-hidden bg-[#7acba5]">
          <Wallpaper />
          <div className="relative pr-[75px] pb-[21px] pl-16">
            {MESSAGES.map((m, i) =>
              m.day ? (
                <div key={i} className="mt-[13px] flex justify-center"><DayChip>{m.day}</DayChip></div>
              ) : (
                <Message key={i} {...m} />
              )
            )}
          </div>
          <div className="absolute top-2 right-[75px] left-16 flex justify-center"><DayChip>SATURDAY</DayChip></div>
          <div className="absolute inset-y-0 right-0 w-1.5 bg-white/10">
            <div className="absolute bottom-px h-[369px] w-full bg-black/20" />
          </div>
        </main>
        <Composer />
      </div>
    </div>
  );
}
